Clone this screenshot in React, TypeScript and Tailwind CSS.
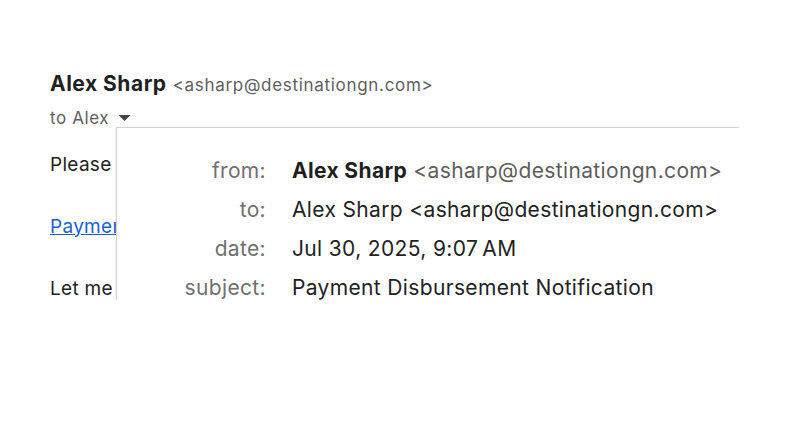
export default function App() {
  const rows: { label: string; value: React.ReactNode }[] = [
    {
      label: "from:",
      value: (
        <>
          <span className="font-bold text-[#1f1f1f]">Alex Sharp</span>{" "}
          <span className="text-[#5e5e5e]">&lt;asharp@destinationgn.com&gt;</span>
        </>
      ),
    },
    { label: "to:", value: "Alex Sharp <asharp@destinationgn.com>" },
    { label: "date:", value: "Jul 30, 2025, 9:07\u202fAM" },
    { label: "subject:", value: "Payment Disbursement Notification" },
  ];

  return (
    <div className="w-[789px] h-[429px] bg-white font-['Inter',sans-serif]">
      <div className="relative ml-[40px] pt-[60px] w-[699px] h-[300px] overflow-hidden">
        {/* Header */}
        <div className="pl-[10px] pt-[10px]">
          <div className="flex items-baseline gap-[6px]">
            <span className="text-[21px] leading-[28px] font-bold text-[#1f1f1f] tracking-[0.5px]">
              Alex Sharp
            </span>
            <span className="text-[17px] text-[#5e5e5e] tracking-[0.7px]">
              &lt;asharp@destinationgn.com&gt;
            </span>
          </div>
          <div className="flex items-center gap-[9px] mt-[8px] text-[17px] leading-[22px] text-[#5e5e5e] tracking-[0.6px]">
            <span>to Alex</span>
            <svg width="13" height="8" viewBox="0 0 13 8">
              <path d="M0.5 1 L12.5 1 L6.5 7 Z" fill="#444" />
            </svg>
          </div>
        </div>

        {/* Body */}
        <div className="pl-[10px] pt-[20px] flex flex-col gap-[31px] text-[19px] leading-[31px] text-[#222] tracking-[0.3px]">
          <p>Please review the attached disbursement details.</p>
          <a className="text-[#1a5fd6] underline" href="#">
            Payment Disbursement Details
          </a>
          <p>Let me know if you have any questions.</p>
        </div>

        {/* Details popup */}
        <div className="absolute left-[76px] top-[127px] w-[700px] h-[260px] bg-white border border-[#d4d4d4] shadow-[0_1px_3px_rgba(0,0,0,0.12)]">
          <div className="grid grid-cols-[149px_1fr] gap-x-[26px] pt-[23px] text-[21px] leading-[39px] tracking-[0.35px]">
            {rows.map((r) => (
              <div key={r.label} className="contents">
                <div className="text-right text-[#6f6f6f]">{r.label}</div>
                <div className="text-[#222]">{r.value}</div>
              </div>
            ))}
          </div>
        </div>
      </div>
    </div>
  );
}
